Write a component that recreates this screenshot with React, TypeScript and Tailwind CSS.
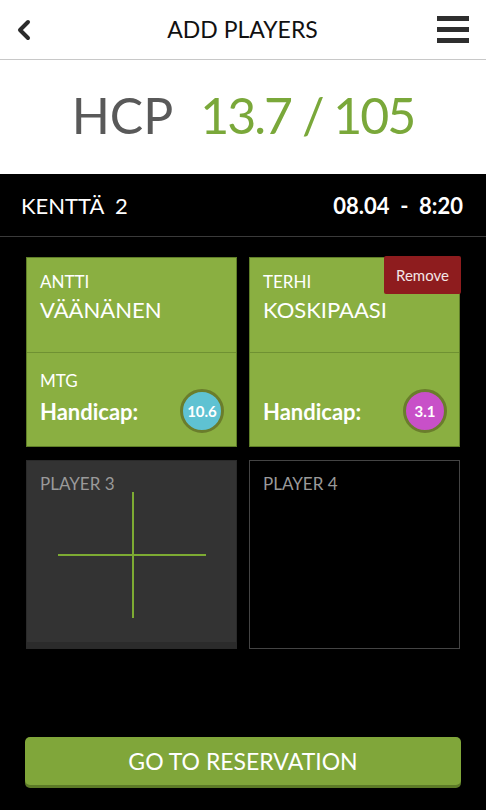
import React from "react";

function Badge({ value, color }: { value: string; color: string }) {
  return (
    <div
      className="w-[44px] h-[44px] rounded-full border-[3px] border-[#6a7d2c] flex items-center justify-center text-white font-bold text-[15px]"
      style={{ backgroundColor: color }}
    >
      {value}
    </div>
  );
}

function PlayerCard({
  first,
  last,
  club,
  hcp,
  color,
  removable,
}: {
  first: string;
  last: string;
  club: string;
  hcp: string;
  color: string;
  removable?: boolean;
}) {
  return (
    <div className="relative h-[190px] bg-[#8aaf41] border border-[#5f7e28] flex flex-col text-white">
      <div className="h-[95px] border-b border-[#6f9132] pl-[13px] pt-[14px]">
        <div className="text-[17px] leading-[20px]">{first}</div>
        <div className="text-[22px] leading-[28px] mt-[4px]">{last}</div>
      </div>
      <div className="flex-1 pl-[13px] pr-[12px] pt-[18px] flex flex-col">
        <div className="text-[17px] leading-[20px] h-[20px]">{club}</div>
        <div className="flex items-center justify-between mt-[-2px]">
          <span className="text-[22px] font-bold">Handicap:</span>
          <Badge value={hcp} color={color} />
        </div>
      </div>
      {removable && (
        <div className="absolute top-[-2px] right-[-2px] w-[77px] h-[38px] bg-[#8e1c1e] rounded-[2px] flex items-center justify-center text-[15px] text-[#f3e6e6]">
          Remove
        </div>
      )}
    </div>
  );
}

export default function App() {
  return (
    <div
      className="w-[486px] h-[810px] bg-black flex flex-col overflow-hidden"
      style={{ fontFamily: "Lato, 'Open Sans', sans-serif" }}
    >
      <div className="h-[60px] bg-white border-b border-[#c8c8c8] grid grid-cols-[1fr_auto_1fr] items-center pl-[16px] pr-[17px]">
        <svg width="16" height="22" viewBox="0 0 16 22">
          <polyline
            points="12,3 4,11 12,19"
            fill="none"
            stroke="#2b2b2b"
            strokeWidth="4"
            strokeLinecap="round"
            strokeLinejoin="round"
          />
        </svg>
        <div className="text-[23px] text-[#111]">ADD PLAYERS</div>
        <div className="flex flex-col gap-[6px] w-[32px] justify-self-end">
          <div className="h-[5px] bg-[#2e2e2e]" />
          <div className="h-[5px] bg-[#2e2e2e]" />
          <div className="h-[5px] bg-[#2e2e2e]" />
        </div>
      </div>
      <div className="h-[114px] bg-white flex items-center justify-center pb-[4px]">
        <span className="text-[50px] text-[#595959] leading-none">HCP</span>
        <span className="text-[50px] text-[#7aa83a] leading-none ml-[27px] tracking-[-2px]">13.7 / 105</span>
      </div>
      <div className="h-[63px] border-b border-[#3a3a3a] flex items-center justify-between pl-[21px] pr-[23px] text-white">
        <span className="text-[22px]">KENTTÄ&nbsp;&nbsp;2</span>
        <span className="text-[22px] font-bold">08.04&nbsp;&nbsp;-&nbsp;&nbsp;8:20</span>
      </div>
      <div className="grid grid-cols-2 gap-x-[12px] gap-y-[13px] px-[26px] pt-[20px]">
        <PlayerCard first="ANTTI" last="VÄÄNÄNEN" club="MTG" hcp="10.6" color="#5fc2d2" />
        <PlayerCard first="TERHI" last="KOSKIPAASI" club="" hcp="3.1" color="#c850c8" removable />
        <div className="h-[189px] bg-[#333333] border border-[#2a2a2a] flex flex-col">
          <div className="flex-1 relative px-[13px] pt-[10px]">
            <div className="text-[17px] text-[#9a9a9a]">PLAYER 3</div>
            <div className="absolute left-[31px] top-[93px] w-[148px] h-[2px] bg-[#7dab33]" />
            <div className="absolute left-[105px] top-[31px] w-[2px] h-[126px] bg-[#7dab33]" />
          </div>
          <div className="h-[6px] bg-[#2b2b2b]" />
        </div>
        <div className="h-[189px] bg-black border border-[#444] px-[13px] pt-[10px]">
          <div className="text-[17px] text-[#9a9a9a]">PLAYER 4</div>
        </div>
      </div>
      <div className="flex-1" />
      <div className="px-[25px] pb-[25px]">
        <div className="h-[48px] bg-[#80a63a] rounded-[5px] shadow-[0_3px_0_#5c7a27] flex items-center justify-center text-white text-[23px]">
          GO TO RESERVATION
        </div>
      </div>
    </div>
  );
}
